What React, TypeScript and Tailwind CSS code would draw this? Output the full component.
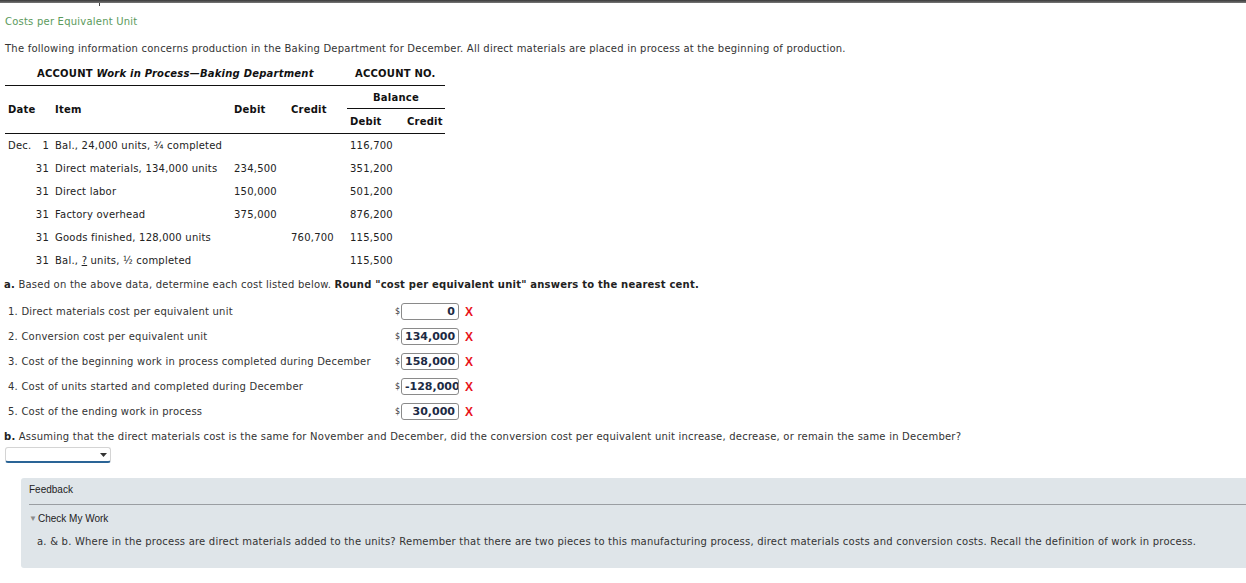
import React from 'react';

const verdana = { fontFamily: '"DejaVu Sans", Verdana, sans-serif' };
const arial = { fontFamily: '"Liberation Sans", Arial, sans-serif' };

type Row = { date?: string; day: string; item: React.ReactNode; debit?: string; credit?: string; bal: string };

const rows: Row[] = [
    { date: 'Dec.', day: '1', item: 'Bal., 24,000 units, ¾ completed', bal: '116,700' },
    { day: '31', item: 'Direct materials, 134,000 units', debit: '234,500', bal: '351,200' },
    { day: '31', item: 'Direct labor', debit: '150,000', bal: '501,200' },
    { day: '31', item: 'Factory overhead', debit: '375,000', bal: '876,200' },
    { day: '31', item: 'Goods finished, 128,000 units', credit: '760,700', bal: '115,500' },
    {
        day: '31',
        item: (
            <>
                Bal., <span className="underline">?</span> units, ½ completed
            </>
        ),
        bal: '115,500',
    },
];

const answers = [
    { label: '1. Direct materials cost per equivalent unit', value: '0' },
    { label: '2. Conversion cost per equivalent unit', value: '134,000' },
    { label: '3. Cost of the beginning work in process completed during December', value: '158,000' },
    { label: '4. Cost of units started and completed during December', value: '-128,000' },
    { label: '5. Cost of the ending work in process', value: '30,000' },
];

const App: React.FC = () => {
    return (
        <div
            className="w-[1246px] h-[583px] bg-white text-[#333] text-[10px] tracking-[0.22px] overflow-hidden relative"
            style={verdana}
        >
            {/* top bar */}
            <div className="h-[3px] bg-gradient-to-b from-[#3a3a3a] to-[#777]" />
            <div className="absolute left-[99px] top-[3px] w-px h-[3px] bg-[#444]" />

            <div className="ml-[5px] mt-[13px] leading-[12px] text-[#5b9a5b]">Costs per Equivalent Unit</div>

            <div className="ml-[5px] mt-[15px] leading-[12px]">
                The following information concerns production in the Baking Department for December. All direct materials are placed in process at the beginning of production.
            </div>

            {/* Account table */}
            <div className="ml-[5px] mt-[7px] w-[440px] text-[#111]">
                <div className="flex h-[24px] items-center border-b border-[#111] font-bold">
                    <div className="pl-[32px] w-[350px]">
                        ACCOUNT <span className="italic">Work in Process—Baking Department</span>
                    </div>
                    <div>ACCOUNT NO.</div>
                </div>

                <div className="flex h-[48px] border-b border-[#111] font-bold">
                    <div className="w-[30px] pl-[3px] flex items-center">Date</div>
                    <div className="w-[14px]" />
                    <div className="w-[181px] pl-[6px] flex items-center">Item</div>
                    <div className="w-[57px] pl-[4px] flex items-center">Debit</div>
                    <div className="w-[58px] pl-[4px] flex items-center">Credit</div>
                    <div className="flex-1 flex flex-col">
                        <div className="h-[23px] ml-[2px] border-b border-[#111] flex items-center justify-center">Balance</div>
                        <div className="flex-1 flex items-center">
                            <div className="w-[56px] pl-[5px]">Debit</div>
                            <div className="pl-[6px]">Credit</div>
                        </div>
                    </div>
                </div>

                {rows.map((r, i) => (
                    <div key={i} className="flex h-[23px] items-center text-[#222]">
                        <div className="w-[30px] pl-[3px]">{r.date ?? ''}</div>
                        <div className="w-[14px] text-right whitespace-nowrap">{r.day}</div>
                        <div className="w-[181px] pl-[6px] whitespace-nowrap">{r.item}</div>
                        <div className="w-[57px] pl-[4px]">{r.debit ?? ''}</div>
                        <div className="w-[58px] pl-[4px]">{r.credit ?? ''}</div>
                        <div className="w-[56px] pl-[5px]">{r.bal}</div>
                        <div className="flex-1" />
                    </div>
                ))}
            </div>

            {/* part a */}
            <div className="ml-[4px] mt-[7px] leading-[12px]">
                <span className="font-bold text-[#222]">a.</span> Based on the above data, determine each cost listed below.{' '}
                <span className="font-bold text-[#222]">Round "cost per equivalent unit" answers to the nearest cent.</span>
            </div>

            <div className="mt-[8px] ml-[8px] flex flex-col">
                {answers.map((a) => (
                    <div key={a.label} className="h-[25px] flex items-center">
                        <div className="w-[387px] whitespace-nowrap">{a.label}</div>
                        <div className="w-[6px] text-[8px] leading-[10px] tracking-normal text-[#333]">$</div>
                        <div className="w-[58px] h-[17px] border border-[#8a8a8a] rounded-[3px] bg-white overflow-hidden whitespace-nowrap text-right px-[3px] leading-[15px] font-bold text-[#1c2a44] text-[11px] tracking-normal">
                            {a.value}
                        </div>
                        <div className="ml-[6px] font-bold text-[#e8141b] text-[12px] tracking-normal" style={arial}>
                            X
                        </div>
                    </div>
                ))}
            </div>

            {/* part b */}
            <div className="ml-[4px] mt-[7px] leading-[12px]">
                <span className="font-bold text-[#222]">b.</span> Assuming that the direct materials cost is the same for November and December, did the conversion cost per equivalent unit increase, decrease, or remain the same in December?
            </div>

            <div className="ml-[5px] mt-[4px] w-[106px] h-[16px] bg-white border border-[#d4d4d4] border-b-2 border-b-[#2a6496] rounded-[3px] flex items-center justify-end pr-[3px]">
                <svg width="7" height="4" viewBox="0 0 7 4">
                    <path d="M0 0 L7 0 L3.5 4 Z" fill="#333" />
                </svg>
            </div>

            {/* feedback */}
            <div className="ml-[21px] mt-[15px] h-[90px] bg-[#dfe5e9] rounded-tl-[3px] rounded-bl-[3px] pl-[8px] pt-[6px]">
                <div className="leading-[12px] text-[#222] tracking-normal" style={arial}>
                    Feedback
                </div>
                <div className="mt-[8px] border-t border-[#9a9ea2]" />
                <div className="mt-[8px] leading-[12px] flex items-center text-[#222] tracking-normal" style={arial}>
                    <span className="text-[8px] text-[#8a8a8a] leading-[12px] mr-[1px]">▼</span>Check My Work
                </div>
                <div className="mt-[11px] pl-[8px] leading-[12px] text-[#333]">
                    a. &amp; b. Where in the process are direct materials added to the units? Remember that there are two pieces to this manufacturing process, direct materials costs and conversion costs. Recall the definition of work in process.
                </div>
            </div>
        </div>
    );
};

export default App;
